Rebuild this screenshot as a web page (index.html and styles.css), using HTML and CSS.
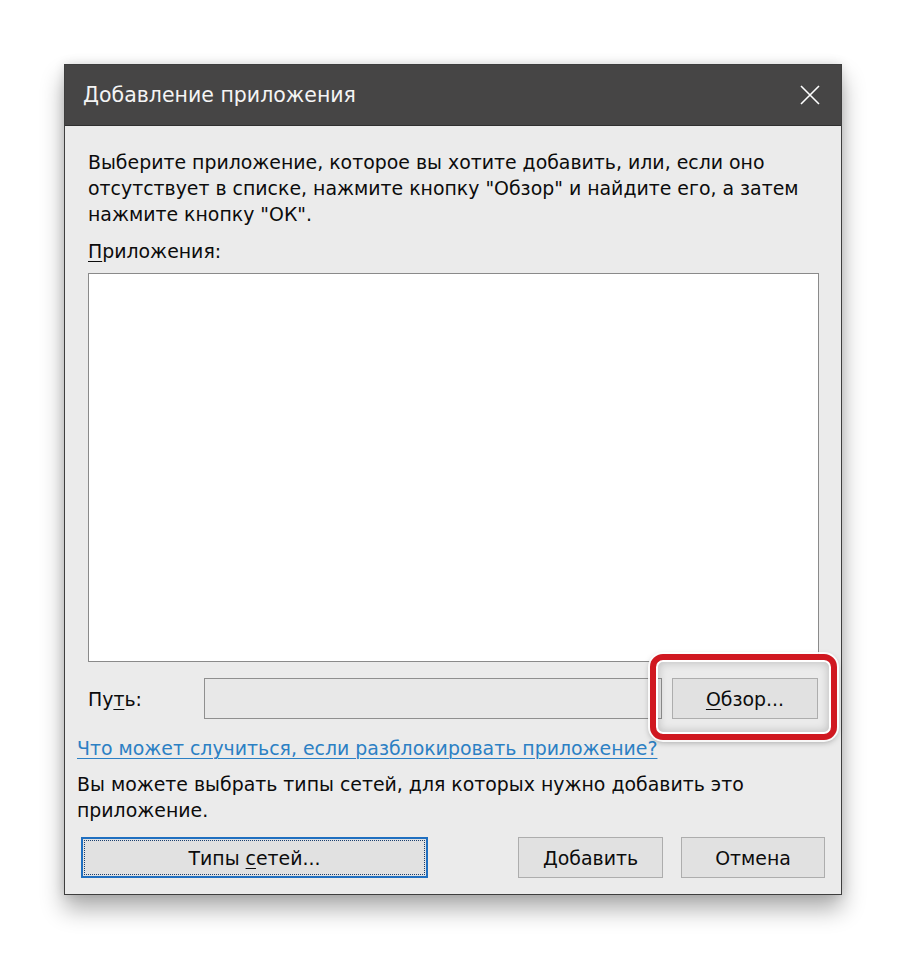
FILE: index.html
```html
<!DOCTYPE html>
<html lang="ru">
<head>
<meta charset="utf-8">
<title>Добавление приложения</title>
<link rel="stylesheet" href="styles.css">
</head>
<body>
<div class="dialog">
  <div class="titlebar">
    <span class="title">Добавление приложения</span>
    <svg class="close" width="20" height="20" viewBox="0 0 20 20" aria-hidden="true">
      <path d="M1 1 L19 19 M19 1 L1 19" stroke="#ffffff" stroke-width="1.6" fill="none"/>
    </svg>
  </div>
  <div class="content">
    <p class="intro">Выберите приложение, которое вы хотите добавить, или, если оно<br>отсутствует в списке, нажмите кнопку "Обзор" и найдите его, а затем<br>нажмите кнопку "ОК".</p>
    <div class="label"><u>П</u>риложения:</div>
    <div class="listbox"></div>
    <div class="pathrow">
      <span class="pathlabel">Пу<u>т</u>ь:</span>
      <div class="pathinput"></div>
      <div class="btn browse"><span><u>О</u>бзор...</span></div>
    </div>
    <a class="link" href="#">Что может случиться, если разблокировать приложение?</a>
    <p class="note">Вы можете выбрать типы сетей, для которых нужно добавить это<br>приложение.</p>
    <div class="buttons">
      <div class="btn focused"><div class="focusring"><span>Типы <u>с</u>етей...</span></div></div>
      <div class="spacer"></div>
      <div class="btn add"><span>Добавить</span></div>
      <div class="btn cancel"><span>Отмена</span></div>
    </div>
  </div>
  <div class="highlight"></div>
</div>
</body>
</html>
```

FILE: styles.css
```css
html, body {
  margin: 0;
  padding: 0;
  background: #ffffff;
}

body {
  width: 906px;
  height: 960px;
  overflow: hidden;
  font-family: "DejaVu Sans", "Open Sans", sans-serif;
  color: #0c0c0c;
}

.dialog {
  position: relative;
  margin: 64px 0 0 64px;
  width: 776px;
  height: 829px;
  border: 1px solid #3e3e3e;
  background: #ebebeb;
  box-shadow: 0 14px 22px rgba(0, 0, 0, 0.32), 0 0 10px rgba(0, 0, 0, 0.12);
  display: flex;
  flex-direction: column;
}

.titlebar {
  height: 61px;
  flex: none;
  background: #464545;
  display: flex;
  align-items: center;
  justify-content: space-between;
  padding: 0 21px 0 18px;
  border-bottom: 1px solid #2f2f2f;
  box-sizing: border-box;
}

.title {
  color: #f4f4f4;
  font-size: 20.5px;
}

.close {
  display: block;
}

.content {
  flex: 1;
  display: flex;
  flex-direction: column;
  padding: 0 16px 0 12px;
  font-size: 18.9px;
  line-height: 26px;
}

.intro {
  margin: 23px 0 0 11px;
  white-space: nowrap;
}

.label {
  margin: 11px 0 0 11px;
}

u {
  text-decoration-thickness: 1px;
  text-underline-offset: 3px;
}

.listbox {
  margin: 9px 0 0 11px;
  width: 731px;
  height: 389px;
  box-sizing: border-box;
  background: #ffffff;
  border: 1px solid #8a8a8a;
}

.pathrow {
  margin: 16px 0 0 11px;
  display: flex;
  align-items: center;
  height: 41px;
}

.pathlabel {
  width: 116px;
  flex: none;
}

.pathinput {
  width: 458px;
  height: 41px;
  box-sizing: border-box;
  border: 1px solid #8f8f8f;
  background: #e8e8e8;
}

.btn {
  height: 41px;
  box-sizing: border-box;
  border: 1px solid #adadad;
  background: #e1e1e1;
  display: flex;
  align-items: center;
  justify-content: center;
  color: #0c0c0c;
}

.browse {
  margin-left: 10px;
  width: 146px;
}

.link {
  margin-top: 16px;
  color: #2c80c4;
  text-decoration: underline;
  text-decoration-thickness: 1px;
  text-underline-offset: 3px;
  align-self: flex-start;
  white-space: nowrap;
}

.note {
  margin: 10px 0 0 0;
  white-space: nowrap;
}

.buttons {
  margin-top: 14px;
  display: flex;
  height: 41px;
}

.focused {
  margin-left: 4px;
  width: 347px;
  border: 2px solid #1f6fc0;
  padding: 1px;
}

.focusring {
  flex: 1;
  align-self: stretch;
  display: flex;
  align-items: center;
  justify-content: center;
  border: 1px dotted #1a3f70;
}

.spacer {
  flex: 1;
}

.add {
  width: 145px;
}

.cancel {
  margin-left: 18px;
  width: 144px;
}

.highlight {
  position: absolute;
  left: 585px;
  top: 589px;
  width: 187px;
  height: 86px;
  box-sizing: border-box;
  border: 6px solid #d01820;
  border-radius: 13px;
  box-shadow: inset 0 0 0 2px #ffffff, inset 0 0 8px 3px rgba(0, 0, 0, 0.18), 0 0 0 2px rgba(255, 255, 255, 0.9), 0 2px 6px rgba(0, 0, 0, 0.35);
}
```
